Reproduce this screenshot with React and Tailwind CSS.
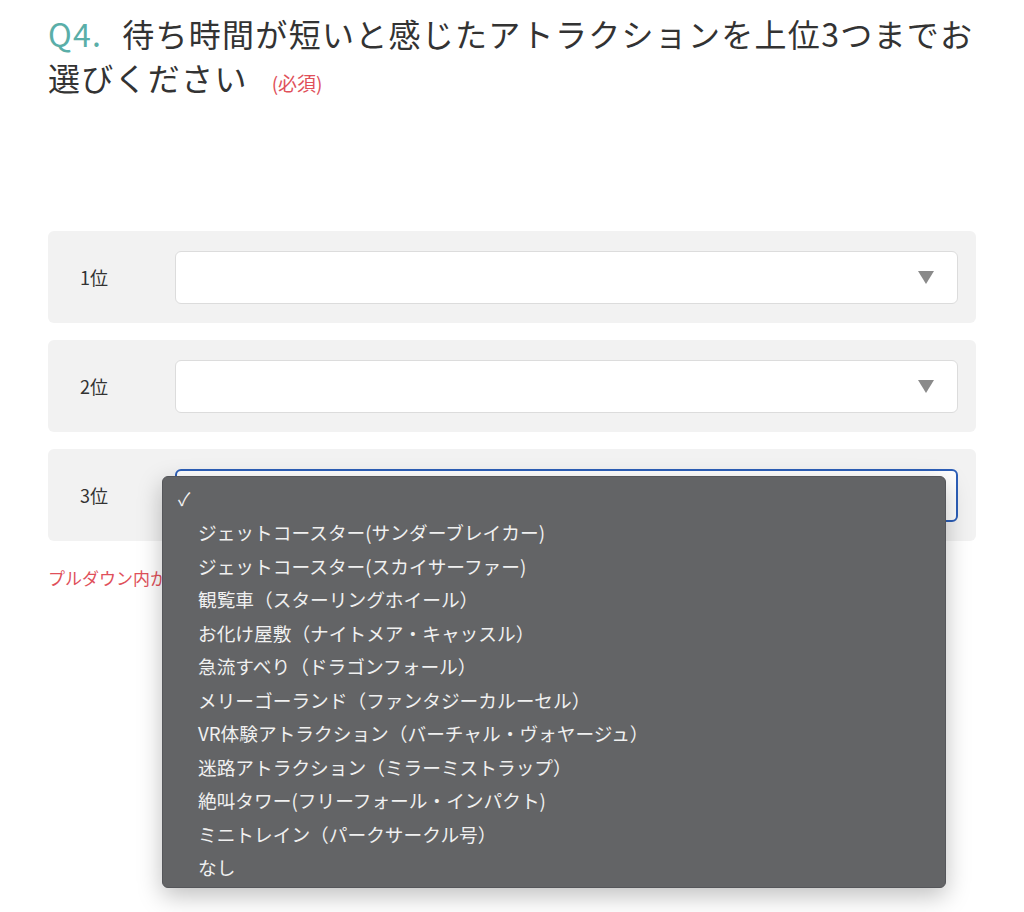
const options = [
  "ジェットコースター(サンダーブレイカー)",
  "ジェットコースター(スカイサーファー)",
  "観覧車（スターリングホイール）",
  "お化け屋敷（ナイトメア・キャッスル）",
  "急流すべり（ドラゴンフォール）",
  "メリーゴーランド（ファンタジーカルーセル）",
  "VR体験アトラクション（バーチャル・ヴォヤージュ）",
  "迷路アトラクション（ミラーミストラップ）",
  "絶叫タワー(フリーフォール・インパクト)",
  "ミニトレイン（パークサークル号）",
  "なし",
];

function Triangle() {
  return (
    <svg width="16" height="13" viewBox="0 0 16 13" className="shrink-0">
      <polygon points="0,0 16,0 8,13" fill="#8a8a8a" />
    </svg>
  );
}

function Row({ label, focused, children }) {
  return (
    <div className="relative h-[92px] bg-[#f2f2f2] rounded-md flex items-center pl-[32px] pr-[18px]">
      <div className="w-[95px] text-[18px] text-[#333]">{label}</div>
      <div
        className={
          focused
            ? "flex-1 h-[53px] bg-white rounded-md border-2 border-[#2d5fb8] flex items-center justify-end pr-[22px]"
            : "flex-1 h-[53px] bg-white rounded-md border border-[#dcdcdc] flex items-center justify-end pr-[23px]"
        }
      >
        {!focused && <Triangle />}
      </div>
      {children}
    </div>
  );
}

export default function App() {
  return (
    <div
      className="min-h-[912px] bg-white px-[48px] pt-[11px]"
      style={{ fontFamily: '"Noto Sans CJK JP", "Noto Sans", sans-serif' }}
    >
      {/* Question title */}
      <h2 className="text-[32px] leading-[44px] tracking-[0.04em] text-[#333]">
        <span className="text-[#5aaea8] mr-[20px]">Q4.</span>待ち時間が短いと感じたアトラクションを上位3つまでお
        <br />
        選びください
        <span className="ml-[24px] text-[19px] tracking-normal text-[#e0505a]">(必須)</span>
      </h2>

      {/* Ranking rows */}
      <div className="mt-[126px] flex flex-col gap-[17px]">
        <Row label="1位" />
        <Row label="2位" />
        <Row label="3位" focused>
          {/* Open dropdown menu */}
          <div className="absolute left-[114px] top-[27px] w-[784px] h-[412px] bg-[#636466] rounded-md shadow-[0_8px_24px_rgba(0,0,0,0.25)] border border-[#55565a] pt-[5px] z-10">
            <div className="h-[33.5px] flex items-center pl-[15px] text-[#f2f2f2] text-[18px]">✓</div>
            {options.map((opt) => (
              <div
                key={opt}
                className="h-[33.5px] flex items-center pl-[35px] text-[#f0f0f0] text-[18.7px] whitespace-nowrap"
              >
                {opt}
              </div>
            ))}
          </div>
        </Row>
      </div>

      <div className="mt-[24px] text-[17px] text-[#e0505a]">プルダウン内からお選びください</div>
    </div>
  );
}
